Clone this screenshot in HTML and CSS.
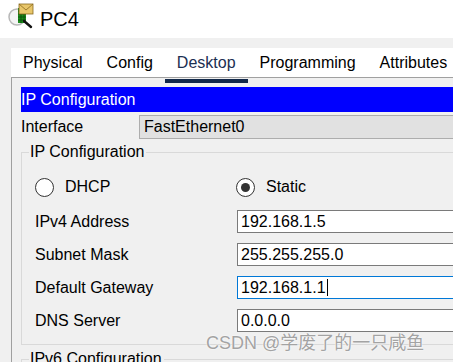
FILE: index.html
```html
<!DOCTYPE html>
<html lang="en">
<head>
    <meta charset="UTF-8">
    <meta name="viewport" content="width=device-width, initial-scale=1.0">
    <title>PC4</title>
    <link rel="stylesheet" href="styles.css">
</head>
<body>

<div class="title-bar">
    <svg class="app-icon" width="32" height="32" viewBox="0 0 32 32">
        <circle cx="13" cy="14" r="8" fill="#f4f4f4" stroke="#b8b8b8" stroke-width="1.5"/>
        <rect x="14" y="5" width="8" height="15" fill="#1c8c1c"/>
        <path d="M14 8h8M14 11h8M14 14h8M14 17h8M17 5v15M20 5v15" stroke="#0b4d0b" stroke-width="0.8"/>
        <rect x="15" y="1" width="14" height="10" fill="#e8c66a" stroke="#8a6a20" stroke-width="0.8"/>
        <path d="M15 1l7 6 7-6" fill="none" stroke="#8a6a20" stroke-width="0.8"/>
        <path d="M20 18l7 6" stroke="#111" stroke-width="2.4" stroke-linecap="round"/>
    </svg>
    <span class="title">PC4</span>
</div>

<div class="window">
    <div class="tabs">
        <div class="tab">Physical</div>
        <div class="tab">Config</div>
        <div class="tab active">Desktop</div>
        <div class="tab">Programming</div>
        <div class="tab">Attributes</div>
    </div>

    <div class="panel">
        <div class="section-head">IP Configuration</div>

        <div class="iface-row">
            <span class="iface-label">Interface</span>
            <div class="combo">FastEthernet0</div>
        </div>

        <fieldset class="group">
            <legend>IP Configuration</legend>
            <div class="group-body">
                <div class="radio-row">
                    <label class="radio"><span class="dot"></span>DHCP</label>
                    <label class="radio checked"><span class="dot"></span>Static</label>
                </div>
                <div class="field-row">
                    <span class="field-label">IPv4 Address</span>
                    <div class="field-input">192.168.1.5</div>
                </div>
                <div class="field-row">
                    <span class="field-label">Subnet Mask</span>
                    <div class="field-input">255.255.255.0</div>
                </div>
                <div class="field-row">
                    <span class="field-label">Default Gateway</span>
                    <div class="field-input focused">192.168.1.1<span class="caret"></span></div>
                </div>
                <div class="field-row">
                    <span class="field-label">DNS Server</span>
                    <div class="field-input">0.0.0.0</div>
                </div>
            </div>
        </fieldset>

        <fieldset class="group group-v6">
            <legend>IPv6 Configuration</legend>
            <div class="group-body"></div>
        </fieldset>
    </div>
</div>

<div class="watermark">CSDN @学废了的一只咸鱼</div>

</body>
</html>
```

FILE: styles.css
```css
html, body {
    margin: 0;
    overflow: hidden;
}

body {
    position: relative;
    height: 362px;
    background-color: #f0f0f0;
    font-family: "Liberation Sans", Arial, sans-serif;
    font-size: 16px;
    color: #000;
}

.title-bar {
    display: flex;
    align-items: center;
    height: 38px;
    background-color: white;
}

.app-icon {
    margin-left: 4px;
}

.title {
    margin-left: 4px;
    font-size: 20px;
    line-height: 28px;
}

.window {
    width: 760px;
    padding: 10px 0 0 11px;
}

.tabs {
    display: flex;
    height: 29px;
    background-color: white;
    border-bottom: 1px solid #a0a0a0;
}

.tab {
    padding: 6px 12px 0 12px;
    line-height: 18px;
    height: 25px;
    border-bottom: 4px solid transparent;
}

.tab.active {
    color: #1b2f52;
    border-bottom-color: #13294b;
}

.panel {
    border-left: 1px solid #a0a0a0;
    padding: 9px 0 0 9px;
    height: 300px;
}

.section-head {
    height: 25px;
    line-height: 25px;
    background-color: #0000ff;
    color: white;
}

.iface-row {
    display: flex;
    align-items: center;
    margin-top: 3px;
}

.iface-label {
    width: 118px;
}

.combo {
    flex: 1;
    height: 22px;
    line-height: 22px;
    padding-left: 4px;
    background-color: #e1e1e1;
    border: 1px solid #adadad;
}

.group {
    margin: 4px 0 0 0;
    padding: 0 0 12px 7px;
    border: 1px solid #d9d9d9;
}

.group legend {
    padding: 0 2px 0 1px;
    line-height: 18px;
}

.group-body {
    padding: 14px 0 0 6px;
}

.radio-row {
    display: flex;
    height: 24px;
    align-items: center;
}

.radio {
    display: flex;
    align-items: center;
    gap: 11px;
    width: 201px;
}

.dot {
    width: 17px;
    height: 17px;
    border: 1px solid #333;
    border-radius: 50%;
    background-color: white;
    display: flex;
    align-items: center;
    justify-content: center;
}

.radio.checked .dot::after {
    content: "";
    width: 9px;
    height: 9px;
    border-radius: 50%;
    background-color: #333;
}

.field-row {
    display: flex;
    align-items: center;
    margin-top: 10px;
}

.radio-row + .field-row {
    margin-top: 11px;
}

.field-label {
    width: 202px;
}

.field-input {
    display: flex;
    align-items: center;
    width: 300px;
    height: 21px;
    padding-left: 3px;
    background-color: white;
    border: 1px solid #7a7a7a;
}

.field-input.focused {
    border-color: #0078d7;
}

.caret {
    width: 1px;
    height: 17px;
    margin-left: 1px;
    background-color: #000;
}

.group-v6 {
    margin-top: 5px;
    height: 40px;
}

.watermark {
    position: absolute;
    left: 206px;
    top: 333px;
    font-family: "Liberation Sans", "Noto Sans CJK SC", sans-serif;
    font-size: 18px;
    line-height: 20px;
    color: #a3a3a3;
    text-shadow: 0 0 2px #fff, 0 0 1px #fff;
}
```
